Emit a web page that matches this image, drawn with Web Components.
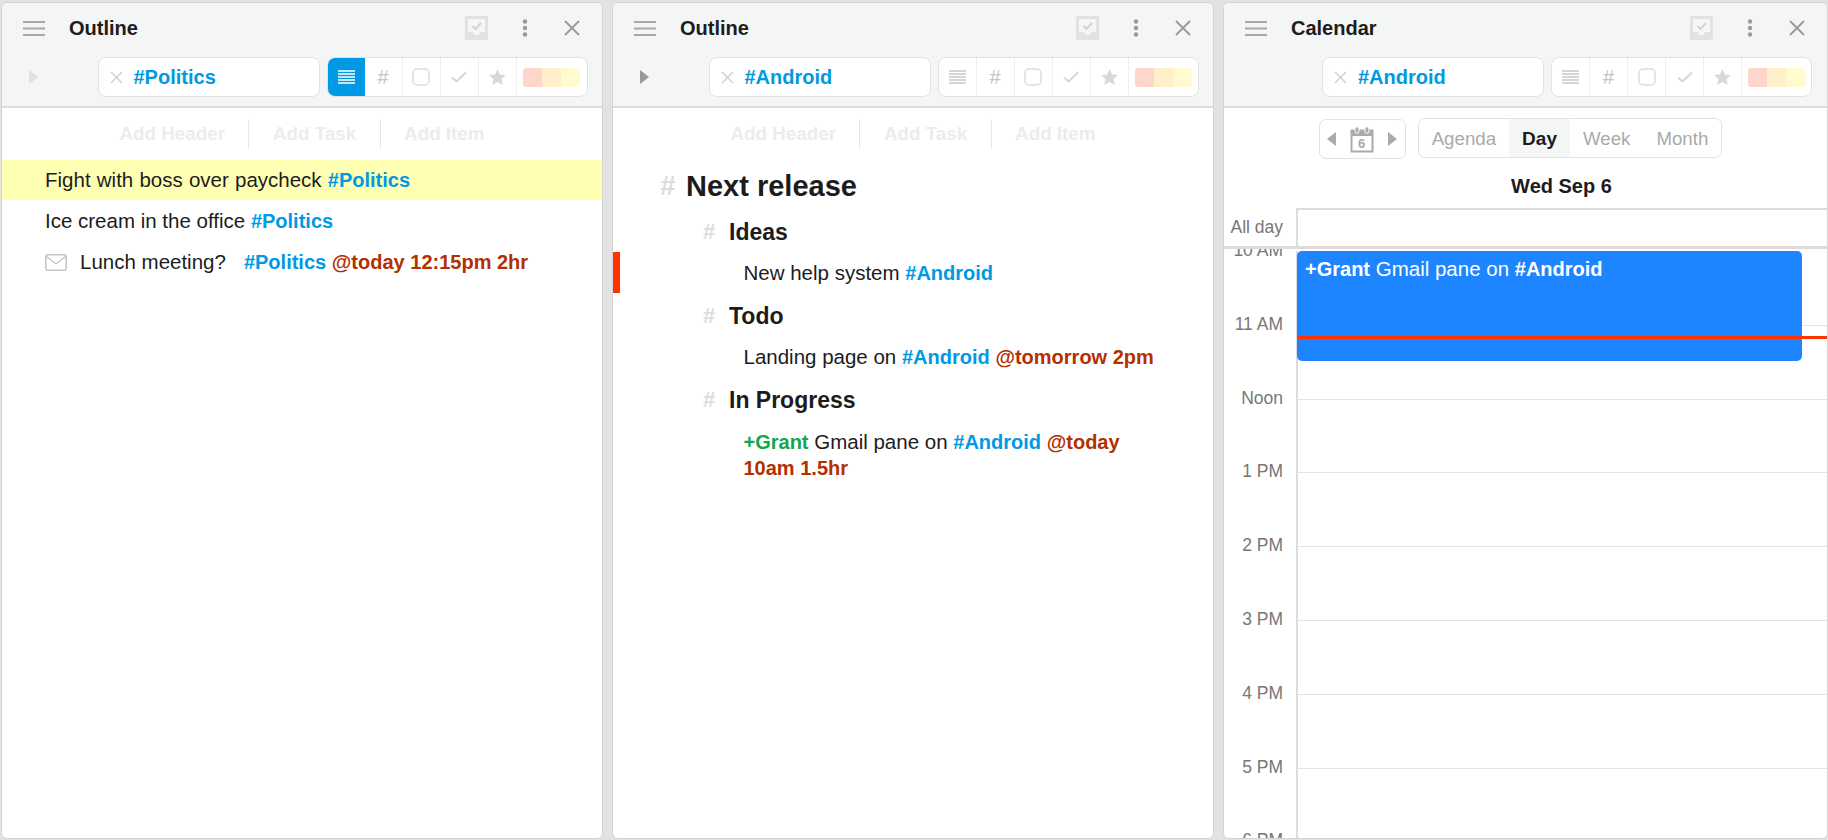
<!DOCTYPE html>
<html lang="en"><head><meta charset="utf-8"><title>Outline and Calendar</title>
<style>
html,body{margin:0;height:100%;overflow:hidden}
body{background:#e2e2e2;font-family:"Liberation Sans",Arial,sans-serif;color:#1c1c1c}
app-shell{height:840px}
</style></head><body>
<app-shell>
  <app-panel heading="Outline" tag="#Politics" active arrow="dim">
    <add-bar></add-bar>
    <task-row hl>Fight with boss over paycheck <tag-text>#Politics</tag-text></task-row>
    <task-row>Ice cream in the office <tag-text>#Politics</tag-text></task-row>
    <task-row mail>Lunch meeting?<span class="sp"></span><tag-text>#Politics</tag-text> <tag-text kind="date">@today 12:15pm 2hr</tag-text></task-row>
  </app-panel>
  <app-panel heading="Outline" tag="#Android" arrow="dark">
    <add-bar></add-bar>
    <outline-view>
      <outline-head level="1">Next release</outline-head>
      <outline-head level="2">Ideas</outline-head>
      <outline-item mark>New help system <tag-text>#Android</tag-text></outline-item>
      <outline-head level="2">Todo</outline-head>
      <outline-item>Landing page on <tag-text>#Android</tag-text> <tag-text kind="date">@tomorrow 2pm</tag-text></outline-item>
      <outline-head level="2">In Progress</outline-head>
      <outline-item><tag-text kind="who">+Grant</tag-text> Gmail pane on <tag-text>#Android</tag-text> <tag-text kind="date">@today 10am 1.5hr</tag-text></outline-item>
    </outline-view>
  </app-panel>
  <app-panel heading="Calendar" tag="#Android" wide>
    <calendar-view></calendar-view>
  </app-panel>
</app-shell>
<script>
function def(name, html, init){
  customElements.define(name, class extends HTMLElement{
    constructor(){super();this.attachShadow({mode:'open'}).innerHTML=html;}
    connectedCallback(){ if(init) init(this,this.shadowRoot); }
  });
}
def('app-shell',`<style>:host{display:flex;gap:9px;padding:2px 0 1px 1px;box-sizing:border-box;width:1828px;overflow:hidden}</style><slot></slot>`);

const I={
 menu:`<svg width="22" height="15" viewBox="0 0 22 15"><path d="M0 1h22M0 7.500h22M0 14h22" stroke="#a8a8a8" stroke-width="2"/></svg>`,
 inbox:`<svg width="23" height="24" viewBox="0 0 23 24"><rect width="23" height="24" fill="#e2e2e2"/><path d="M3 3h17v13h-5l-1 3H9l-1-3H3z" fill="#f5f6f6"/><path d="M7.500 10l3 3 5.500-6" fill="none" stroke="#d2d2d2" stroke-width="2"/></svg>`,
 dots:`<svg width="6" height="18" viewBox="0 0 6 18"><g fill="#999"><circle cx="3" cy="2.500" r="2.200"/><circle cx="3" cy="9" r="2.200"/><circle cx="3" cy="15.500" r="2.200"/></g></svg>`,
 close:`<svg width="16" height="16" viewBox="0 0 16 16"><path d="M1 1l14 14M15 1L1 15" stroke="#999" stroke-width="1.800"/></svg>`,
 x:`<svg width="13" height="13" viewBox="0 0 13 13"><path d="M1 1l11 11M12 1L1 12" stroke="#ccc" stroke-width="1.300"/></svg>`,
 list:c=>`<svg width="17" height="14" viewBox="0 0 17 14"><path d="M0 1h17M0 4h17M0 7h17M0 10h17M0 13h17" stroke="${c}" stroke-width="1.300"/></svg>`,
 box:`<svg width="18" height="18" viewBox="0 0 18 18"><rect x="1" y="1" width="16" height="16" rx="4" fill="none" stroke="#ddd" stroke-width="1.500"/></svg>`,
 check:`<svg width="16" height="12" viewBox="0 0 16 12"><path d="M1 6.500l4.500 4L15 1.500" fill="none" stroke="#d6d6d6" stroke-width="2"/></svg>`,
 star:`<svg width="17" height="16" viewBox="0 0 17 16"><path d="M8.500 0l2.500 5.400 6 .7-4.400 4 1.200 5.900-5.300-3-5.300 3 1.200-5.900L0 6.100l6-.7z" fill="#d8d8d8"/></svg>`,
 tri:(c,d)=>`<svg width="9" height="14" viewBox="0 0 9 14"><path d="${d==='l'?'M9 0v14L0 7z':'M0 0v14l9-7z'}" fill="${c}"/></svg>`,
 mail:`<svg width="22" height="17" viewBox="0 0 22 17"><rect x=".8" y=".8" width="20.400" height="15.400" rx="1.500" fill="none" stroke="#c4c4c4" stroke-width="1.500"/><path d="M1 2l10 8 10-8" fill="none" stroke="#c4c4c4" stroke-width="1.300"/></svg>`,
 cal:`<svg width="24" height="27" viewBox="0 0 24 27"><path d="M1.500 4.500h21v21h-21z" fill="none" stroke="#aaa" stroke-width="2"/><path d="M1 4h22v6H1z" fill="#aaa"/><rect x="5" y=".8" width="4" height="6.500" rx="2" fill="#aaa" stroke="#fff"/><rect x="15" y=".8" width="4" height="6.500" rx="2" fill="#aaa" stroke="#fff"/></svg>`
};

def('app-panel',`<style>
:host{display:flex;flex-direction:column;flex:0 0 602px;height:837px;box-sizing:border-box;background:#fff;border:1px solid #d4d4d4;border-radius:6px;overflow:hidden;position:relative}
:host([wide]){flex-basis:605px}
:host([wide]) .bot{padding-left:2px}
header{flex:none;height:103px;background:#f4f5f5;border-bottom:2px solid #dcdcdc;display:flex;flex-direction:column}
.top{height:54px;padding:0 22px 4px 21px;display:flex;align-items:center;box-sizing:border-box;flex:none}
h1{font:bold 20px/24px "Liberation Sans",sans-serif;color:#1c1c1c;margin:0 0 0 24px;flex:1}
.i1{display:flex;margin-right:34px}.i2{display:flex;margin-right:36px}.i3{display:flex}
.bot{display:flex;justify-content:center;height:40px;align-items:stretch}
.arrow{width:81px;display:flex;align-items:center;padding-left:12px;box-sizing:border-box;flex:none}
.search{width:222px;flex:none;box-sizing:border-box;background:#fff;border:1px solid #e2e2e2;border-radius:8px;display:flex;align-items:center;padding-left:11px;gap:11px}
.search b{font:bold 20px "Liberation Sans",sans-serif;color:#0099e3}
.filters{width:261px;flex:none;margin-left:7px;box-sizing:border-box;background:#fff;border:1px solid #e2e2e2;border-radius:8px;display:flex;overflow:hidden}
.c{width:38px;flex:none;border-right:1px solid #efefef;display:flex;align-items:center;justify-content:center;box-sizing:border-box;font:20px "Liberation Sans",sans-serif;color:#c4c4c4}
.c.on{background:#0099e3;width:37px;border-right:0}
.sw{flex:1;display:flex;align-items:center;justify-content:center}
.sw i{width:19px;height:19px;display:block}
.sw i:first-child{background:#ffd6cc;border-radius:3px 0 0 3px}.sw i:nth-child(2){background:#ffefca}.sw i:last-child{background:#fffbcf;border-radius:0 3px 3px 0}
main{flex:1;min-height:0;display:flex;flex-direction:column}
</style>
<header><div class="top"><span class="m" style="display:flex">${I.menu}</span><h1></h1><span class="i1">${I.inbox}</span><span class="i2">${I.dots}</span><span class="i3">${I.close}</span></div>
<div class="bot"><div class="arrow"></div><div class="search">${I.x}<b></b></div><div class="filters"><div class="c l"></div><div class="c">#</div><div class="c">${I.box}</div><div class="c">${I.check}</div><div class="c">${I.star}</div><div class="sw"><i></i><i></i><i></i></div></div></div></header>
<main><slot></slot></main>`,(el,s)=>{
  s.querySelector('h1').textContent=el.getAttribute('heading');
  s.querySelector('.search b').textContent=el.getAttribute('tag');
  const a=el.getAttribute('arrow');
  if(a) s.querySelector('.arrow').innerHTML=I.tri(a==='dim'?'#e0e0e0':'#999');
  const l=s.querySelector('.l');
  if(el.hasAttribute('active')){l.classList.add('on');l.innerHTML=I.list('#fff');}
  else l.innerHTML=I.list('#c8c8c8');
});

def('add-bar',`<style>:host{display:flex;justify-content:center;align-items:center;height:52px;flex:none;box-sizing:border-box;font:bold 18.800px "Liberation Sans",sans-serif;color:#ececec}
span{padding:0 23.500px;line-height:30px}span+span{border-left:1px solid #e8e8e8}</style><span>Add Header</span><span>Add Task</span><span>Add Item</span>`);

def('tag-text',`<style>:host{font-weight:bold;font-size:20px;color:#0099e3}:host([kind=date]){color:#b33000}:host([kind=who]){color:#12a650}</style><slot></slot>`);

def('task-row',`<style>:host{display:block;line-height:41px;height:41px;padding-left:43px;font-size:20.500px;color:#1c1c1c;box-sizing:border-box;white-space:nowrap}
:host([hl]){background:#ffffb3;height:40px;line-height:40px;word-spacing:.5px}
.ic{display:none;margin-right:13px;vertical-align:-2px}:host([mail]) .ic{display:inline-block}
::slotted(.sp){display:inline-block;width:18px}
.ic svg{display:block}
</style><span class="ic">${I.mail}</span><slot></slot>`);

def('outline-view',`<style>:host{display:block;position:relative}</style><slot></slot>`);
def('outline-head',`<style>:host{display:flex;align-items:center;font-weight:bold;color:#1c1c1c}
:host([level="1"]){font-size:29px;height:48px;padding-left:47px;margin-top:2px}
:host([level="2"]){font-size:23px;height:44px;padding-left:90px}
i{font-style:normal;color:#dcdcdc;font-weight:bold}
:host([level="1"]) i{font-size:28px;width:26px}:host([level="2"]) i{font-size:22px;width:26px}
</style><i>#</i><slot></slot>`);
def('outline-item',`<style>:host{display:block;font-size:20.500px;line-height:26px;color:#1c1c1c;padding:6px 50px 8px 130.500px;position:relative}
:host(:last-child){padding-top:7px}
.mark{display:none;position:absolute;left:0;top:-2px;width:7px;height:41px;background:#ff3300}
:host([mark]) .mark{display:block}</style><div class="mark"></div><slot></slot>`);

const hours=['10 AM','11 AM','Noon','1 PM','2 PM','3 PM','4 PM','5 PM','6 PM'];
def('calendar-view',`<style>:host{display:flex;flex-direction:column;flex:1;min-height:0;font-size:18.700px}
.tb{display:flex;justify-content:center;align-items:flex-start;gap:12px;padding:10px 10px 0 0;height:53px;box-sizing:border-box;flex:none}
.nav{display:flex;align-items:center;justify-content:space-between;box-sizing:border-box;width:87px;height:40px;margin-top:1px;border:1px solid #e2e2e2;border-radius:7px;padding:0 8px 0 7px}
.calic{position:relative;display:flex;width:24px;height:27px}
.calic b{position:absolute;left:0;right:0;top:10px;text-align:center;font:bold 13px/15px "Liberation Sans",sans-serif;color:#aaa}
.views{display:flex;box-sizing:border-box;height:40px;border:1px solid #e2e2e2;border-radius:7px;overflow:hidden;color:#aaa}
.views span{display:flex;align-items:center;padding:2px 13px 0}
.views .on{background:#f4f5f5;color:#1c1c1c;font-weight:bold;font-size:19px}
.date{flex:none;height:47px;box-sizing:border-box;display:flex;align-items:center;justify-content:center;padding:3px 0 0 72px;font-weight:bold;font-size:20px;color:#1c1c1c}
.allday{flex:none;display:grid;grid-template-columns:72px 1fr;height:38px;border-bottom:3px solid #dcdcdc}
.allday span{align-self:center;text-align:right;padding:0 13px 0 0;font-size:17.500px;color:#777}
.allday div{border:2px solid #dcdcdc;border-width:2px 0 0 2px}
.grid{flex:1;min-height:0;position:relative;overflow:hidden;padding-top:2px}
.hr{height:73.800px;display:grid;grid-template-columns:72px 1fr;box-sizing:border-box}
.hr span{font-size:17.500px;line-height:22px;height:22px;margin-top:-12px;text-align:right;padding-right:13px;color:#777}
.hr div{border-left:2px solid #dcdcdc;border-top:1px solid #e4e4e4}
.hr:first-child div{border-top:0}
.ev{position:absolute;left:73px;top:2px;width:505px;height:110px;background:rgba(20,128,255,.96);border-radius:5px;color:#fff;box-sizing:border-box;padding:7px 8px;line-height:22px;font-size:20.500px}
.ev b{font-size:20px}
.now{position:absolute;left:73px;right:0;top:87px;height:3px;background:#ff3300}
</style>
<div class="tb"><div class="nav">${I.tri('#aaa','l')}<span class="calic">${I.cal}<b>6</b></span>${I.tri('#aaa')}</div>
<div class="views"><span>Agenda</span><span class="on">Day</span><span>Week</span><span>Month</span></div></div>
<div class="date">Wed Sep 6</div>
<div class="allday"><span>All day</span><div></div></div>
<div class="grid">${hours.map(h=>`<div class="hr"><span>${h}</span><div></div></div>`).join('')}
<div class="ev"><b>+Grant</b> Gmail pane on <b>#Android</b></div><div class="now"></div></div>`);
</script>
</body></html>
